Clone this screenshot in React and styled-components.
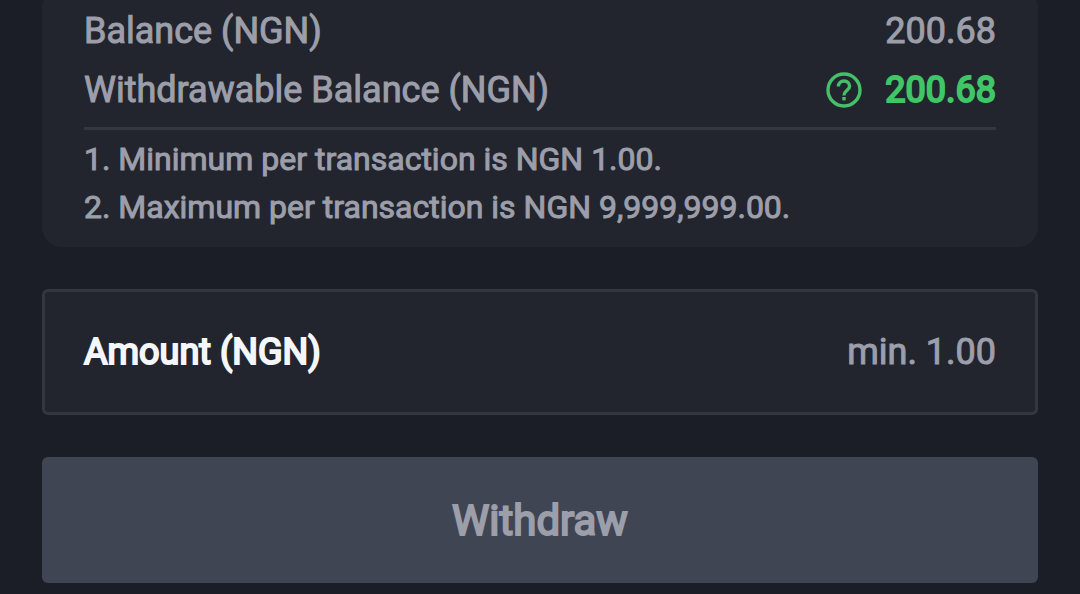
import styled, { createGlobalStyle } from "styled-components";
import React, { useState } from "react";

export default function App() {
    const [amount, setAmount] = useState("");

    return(
        <>
            <GlobalStyle />
            <Page>
                <BalanceCard>
                    <BalanceRow>
                        <span>Balance (NGN)</span>
                        <Value>200.68</Value>
                    </BalanceRow>
                    <BalanceRow>
                        <span>Withdrawable Balance (NGN)</span>
                        <ValueGroup>
                            <HelpButton type="button" aria-label="About withdrawable balance">
                                <HelpIcon />
                            </HelpButton>
                            <Value $highlight>200.68</Value>
                        </ValueGroup>
                    </BalanceRow>
                    <Rules>
                        <li>1. Minimum per transaction is NGN 1.00.</li>
                        <li>2. Maximum per transaction is NGN 9,999,999.00.</li>
                    </Rules>
                </BalanceCard>
                <AmountField>
                    <AmountLabel htmlFor="amount">Amount (NGN)</AmountLabel>
                    <AmountInput
                        id="amount"
                        inputMode="decimal"
                        placeholder="min. 1.00"
                        value={amount}
                        onChange={e => setAmount(e.target.value)}
                    />
                </AmountField>
                <WithdrawButton type="button" disabled={!amount}>Withdraw</WithdrawButton>
            </Page>
        </>
    );
}

function HelpIcon() {
    return(
        <svg width="36" height="36" viewBox="0 0 36 36" fill="none" stroke="currentColor" strokeWidth="3.4" aria-hidden="true">
            <circle cx="18" cy="18" r="16" />
            <path d="M12.4 14.6c0-3.4 2.4-5.6 5.6-5.6s5.6 2.1 5.6 5.2c0 3.9-5.6 4.4-5.6 9.2" />
            <path d="M18 25v3.4" />
        </svg>
    );
}

const GlobalStyle = createGlobalStyle`
    * {
        box-sizing: border-box;
    }

    body {
        margin: 0;
        background-color: #1b1e26;
        font-family: Roboto, sans-serif;
        -webkit-text-stroke: 1px;
    }

    button, input {
        font-family: inherit;
    }
`

const Page = styled.main`
    display: flex;
    flex-direction: column;
    gap: 42px;
    padding: 0 42px 11px;
`

const BalanceCard = styled.section`
    margin-top: -12px;
    padding: 13px 42px 16px;
    border-radius: 20px;
    background-color: #22252e;
`

const BalanceRow = styled.div`
    display: flex;
    justify-content: space-between;
    align-items: center;
    height: 59px;
    font-size: 36px;
    color: #9c9eaa;
`

const Value = styled.span`
    color: ${props => props.$highlight ? "#3fc667" : "#9c9eaa"};
    -webkit-text-stroke-width: ${props => props.$highlight ? "2px" : "1px"};
`

const ValueGroup = styled.div`
    display: flex;
    align-items: center;
    gap: 23px;
`

const HelpButton = styled.button`
    display: flex;
    padding: 0;
    border: none;
    background: none;
    color: #45c069;
`

const Rules = styled.ul`
    margin: 8px 0 0;
    padding: 5px 0 0;
    border-top: 3px solid #343740;
    list-style: none;
    font-size: 32px;
    line-height: 48px;
    color: #9c9eaa;
`

const AmountField = styled.div`
    display: flex;
    justify-content: space-between;
    align-items: center;
    height: 126px;
    padding: 0 39px;
    border: 3px solid #343740;
    border-radius: 6px;
    background-color: #22252e;
    font-size: 36px;
`

const AmountLabel = styled.label`
    color: #f5f6fa;
    -webkit-text-stroke-width: 2px;
`

const AmountInput = styled.input`
    flex: 1;
    min-width: 0;
    padding: 0;
    border: none;
    outline: none;
    background: none;
    text-align: right;
    font-size: 36px;
    color: #f5f6fa;
    -webkit-text-stroke-width: 1px;

    &::placeholder {
        color: #9c9eaa;
    }
`

const WithdrawButton = styled.button`
    height: 126px;
    border: none;
    border-radius: 6px;
    background-color: #404553;
    font-size: 42px;
    color: #9c9eaa;
    -webkit-text-stroke-width: 2px;
`
